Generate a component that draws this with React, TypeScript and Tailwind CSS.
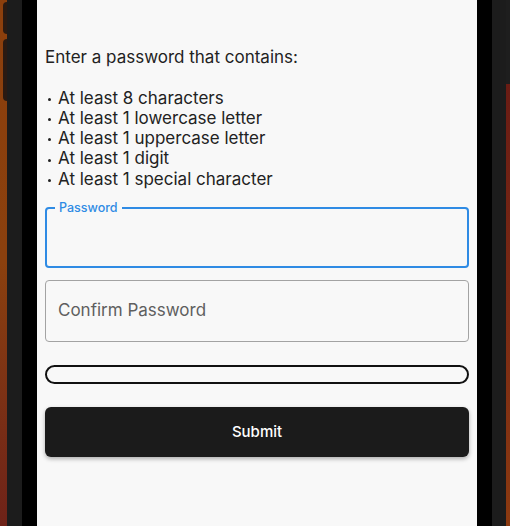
export default function App() {
  const rules = [
    "At least 8 characters",
    "At least 1 lowercase letter",
    "At least 1 uppercase letter",
    "At least 1 digit",
    "At least 1 special character",
  ];

  return (
    <div className="flex h-[526px] w-[510px] overflow-hidden bg-black font-['Inter',sans-serif]">
      {/* wallpaper + bezel, left */}
      <div className="flex w-[7px] flex-col bg-gradient-to-b from-[#8c3f0c] via-[#8a400e] to-[#6e2218]">
        <div className="ml-[3px] mt-[2px] h-[32px] w-[4px] rounded-l-sm bg-[#2a1a12]" />
        <div className="ml-[3px] mt-[5px] h-[62px] w-[4px] rounded-l-sm bg-[#2a1a12]" />
      </div>
      <div className="w-[15px] bg-[#1c1c1c]" />
      <div className="w-[15px] bg-black" />

      {/* screen */}
      <div className="flex w-[440px] flex-col bg-[#f8f8f8] px-2 pt-[47px]">
        <div className="text-[17px] leading-[20.3px] text-[#222]">
          <p>Enter a password that contains:</p>
          <p>&nbsp;</p>
          {rules.map((r) => (
            <p key={r} className="flex items-center">
              <span className="ml-[3px] mr-[7px] mt-[3px] h-[3px] w-[3px] shrink-0 rounded-full bg-[#222]" />
              <span>{r}</span>
            </p>
          ))}
        </div>

        <div className="relative mt-[18px] h-[61px] rounded-[4px] border-2 border-[#2f8be4]">
          <span className="absolute -top-[9px] left-[8px] bg-[#f8f8f8] px-[4px] text-[12.5px] font-medium leading-[16px] text-[#2f8be4]">
            Password
          </span>
        </div>

        <div className="mt-[12px] flex h-[62px] items-center rounded-[4px] border border-[#a3a3a3] px-3">
          <span className="text-[17px] text-[#5f5f5f]">Confirm Password</span>
        </div>

        <div className="mt-[23px] h-[19px] rounded-full border-2 border-[#111]" />

        <button className="mt-[23px] flex h-[50px] items-center justify-center rounded-[6px] bg-[#1b1b1b] text-[15px] font-medium text-white shadow-[0_2px_4px_rgba(0,0,0,0.3)]">
          Submit
        </button>
      </div>

      {/* bezel + wallpaper, right */}
      <div className="w-[15px] bg-black" />
      <div className="w-[14px] bg-[#1c1c1c]" />
      <div className="flex w-[4px] flex-col">
        <div className="h-[84px] bg-[#1e1e1e]" />
        <div className="flex-1 bg-gradient-to-b from-[#6a1c14] via-[#7a2a14] to-[#8c3a10]" />
      </div>
    </div>
  );
}
